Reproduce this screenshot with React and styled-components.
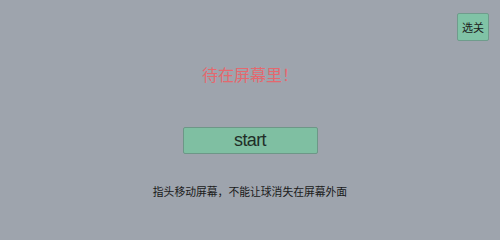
import React from "react";
import styled, { createGlobalStyle } from "styled-components";

const GlobalStyle = createGlobalStyle`
  html, body {
    margin: 0;
    padding: 0;
    background: #9ea4ad;
  }
  body {
    font-family: "Noto Sans CJK SC", "Liberation Sans", sans-serif;
  }
`;

const App = () => {
  return (
    <>
      <GlobalStyle />
      <Screen>
        <TopBar>
          <LevelButton>选关</LevelButton>
        </TopBar>
        <Title>待在屏幕里！</Title>
        <StartButton>start</StartButton>
        <Hint>指头移动屏幕，不能让球消失在屏幕外面</Hint>
      </Screen>
    </>
  );
};

const Screen = styled.div`
  width: 500px;
  height: 231px;
  display: flex;
  flex-direction: column;
  align-items: center;
  background: #9ea4ad;
  overflow: hidden;
`;

const TopBar = styled.div`
  width: 100%;
  display: flex;
  justify-content: flex-end;
  padding: 13px 11px 0 0;
  box-sizing: border-box;
`;

const LevelButton = styled.button`
  width: 32px;
  height: 28px;
  padding: 0;
  background: #80c3a6;
  border: 1px solid #6f9c8c;
  border-radius: 2px;
  color: #1c1c1c;
  font-size: 11px;
  font-family: "Noto Sans CJK SC", sans-serif;
`;

const Title = styled.div`
  margin-top: 25px;
  height: 16px;
  line-height: 16px;
  font-size: 16px;
  color: #e4686e;
`;

const StartButton = styled.button`
  margin-top: 45px;
  width: 135px;
  height: 27px;
  padding: 0;
  background: #7fbfa2;
  border: 1px solid #6d9787;
  border-radius: 2px;
  color: #1f2e28;
  font-size: 18px;
  font-family: "Liberation Sans", Arial, sans-serif;
  letter-spacing: -0.6px;
`;

const Hint = styled.div`
  margin-top: 31px;
  height: 12px;
  line-height: 12px;
  font-size: 10.8px;
  color: #1a1a1a;
`;

export default App;
